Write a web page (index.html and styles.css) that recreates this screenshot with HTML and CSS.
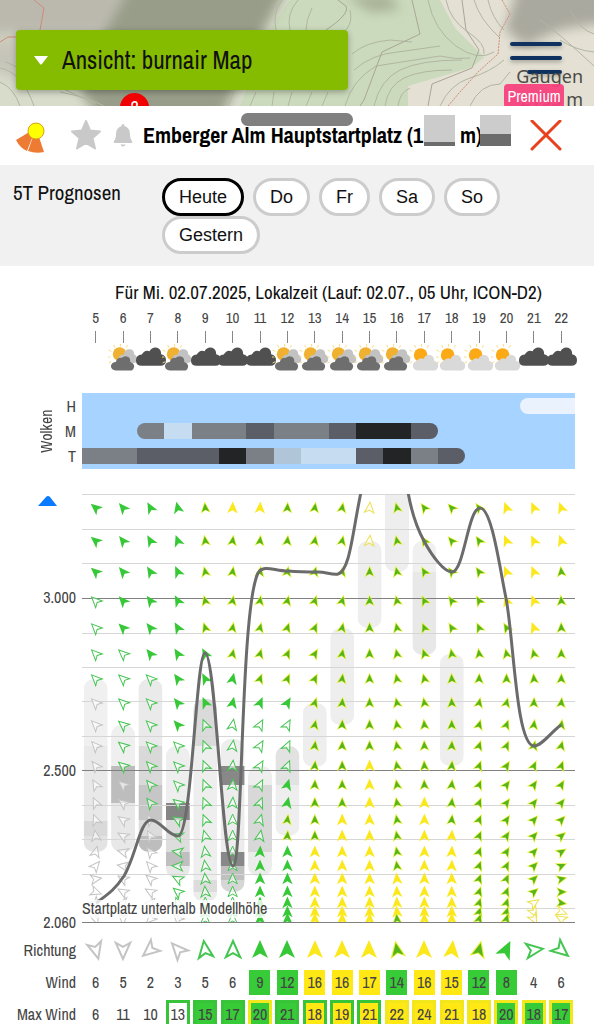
FILE: index.html
```html
<!DOCTYPE html>
<html lang="de">
<head>
    <meta charset="UTF-8">
    <meta name="viewport" content="width=device-width, initial-scale=1.0">
    <title>burnair Map</title>
    <link rel="stylesheet" href="styles.css">
</head>
<body>
    <div class="map">
        <svg class="terrain" viewBox="0 0 594 106" preserveAspectRatio="xMidYMid slice" aria-hidden="true">
            <defs>
                <filter id="soft" x="-20%" y="-20%" width="140%" height="140%"><feGaussianBlur stdDeviation="6"/></filter>
            </defs>
            <rect width="594" height="106" fill="#d8dccb"/>
            <path d="M290 0H440L455 25L485 55L470 70L410 90V106H240L270 30Z" fill="#cbdabc"/>
            <path d="M440 0H594V106H408V86L470 68L485 58L455 28Z" fill="#e4e1d4"/>
            <g filter="url(#soft)">
                <path d="M-20 -30H140L110 34H-20Z" fill="#bbb9ae"/>
                <path d="M140 -30H296L262 34L215 130H110L80 92L106 30Z" fill="#979d88"/>
                <path d="M-10 40H20V80L-10 70Z" fill="#c6c4b8"/>
                <path d="M345 -5H390L400 10L370 12Z" fill="#a7b096"/>
                <path d="M520 -20H610V22L560 30L525 46L505 30Z" fill="#aaa99f"/>
            </g>
            <g fill="none" stroke="#b1b6a1" stroke-width="1">
                <path d="M0 68Q22 72 34 106M0 82Q14 88 20 106M6 62Q40 78 96 104M60 92Q90 98 104 106"/>
                <path d="M282 0Q272 14 276 30M298 0Q286 14 290 30M312 8Q306 20 306 30"/>
                <path d="M350 10Q355 32 330 38M352 54Q366 42 390 40L412 42M354 70Q372 54 398 52L440 46M345 106Q352 80 376 66L440 56Q456 60 470 58"/>
                <path d="M234 92L228 106M256 92L250 106M274 92L272 106M292 92L288 106M312 92L306 106M328 92L322 106"/>
                <path d="M385 106Q388 86 404 78T452 70M374 106Q380 80 400 70T462 60M398 106Q400 92 410 88"/>
                <path d="M428 0Q434 30 456 46T494 52M446 0Q450 20 468 32T484 54M474 0Q480 20 500 38M488 0Q492 18 504 30"/>
                <path d="M440 106Q450 84 470 78T504 60M470 106Q480 84 500 84L510 72M560 40Q575 50 594 52M570 10Q580 30 594 34M540 20Q560 34 594 66"/>
            </g>
            <g fill="none" stroke="#a9a696" stroke-width="1">
                <path d="M326 30Q350 14 346 6L338 0M412 0L420 34L382 52L364 100L360 106M462 0L466 30L479 50L472 68L432 84L428 106"/>
            </g>
            <g fill="none" stroke="#cf8b78" stroke-width="1">
                <path d="M34 0L44 8L40 30M0 42L8 37H16"/>
                <path d="M502 0L510 14L500 32L498 54L478 72L460 92L448 106" stroke-dasharray="2 1"/>
            </g>
        </svg>
        <button class="view-select" type="button"><svg width="16" height="9" viewBox="0 0 16 9" aria-hidden="true"><path d="M1 0H15L9 8Q8 9 7 8Z" fill="#fff"/></svg>Ansicht: burnair Map</button>
        <button class="menu" type="button" aria-label="Menü"><i></i><i></i><i></i></button>
        <span class="peak">Gaugen<br>2193 m</span>
        <span class="premium">Premium</span>
        <span class="marker">2</span>
    </div>

    <main class="sheet">
        <header class="spot">
            <span class="handle"></span>
            <svg class="sector" width="32" height="36" viewBox="0 0 32 36" aria-hidden="true">
                <path d="M20 10L0 22Q4 30 11 33ZM20 10L12 33Q20 36 28 34Z" fill="#ee7b33"/>
                <circle cx="20" cy="13" r="8" fill="#ff0" stroke="#d8a21c" stroke-width="1"/>
            </svg>
            <svg class="star" width="32" height="32" viewBox="0 0 32 32" aria-hidden="true"><path d="M16 1L20 10.500L30 11.500L22.500 18L25 28.500L16 23L7 28.500L9.500 18L2 11.500L12 10.500Z" fill="#c9c9c9" stroke="#c9c9c9" stroke-width="2" stroke-linejoin="round"/></svg>
            <svg class="bell" width="20" height="23" viewBox="0 0 20 23" aria-hidden="true"><path d="M8.500 2Q8.500 0 10 0T11.500 2Q17 4 17 10Q17 15 19 17Q20 19 18 19H2Q0 19 1 17Q3 15 3 10Q3 4 8.500 2ZM7.500 20.500H12.500Q12 22.500 10 22.500T7.500 20.500Z" fill="#c9c9c9"/></svg>
            <h1>Emberger Alm Hauptstartplatz (1<i class="patch"></i> m)<i class="patch patch-low"></i></h1>
            <button class="close" type="button" aria-label="Schliessen"><svg width="32" height="32" viewBox="0 0 32 32"><path d="M2 1L30 29M30 1L2 29" stroke="#e8411c" stroke-width="3" stroke-linecap="round"/></svg></button>
        </header>

        <nav class="days">
            <span class="days-label">5T Prognosen</span>
            <div class="day-list">
                <button type="button" class="active">Heute</button>
                <button type="button">Do</button>
                <button type="button">Fr</button>
                <button type="button">Sa</button>
                <button type="button">So</button>
                <button type="button">Gestern</button>
            </div>
        </nav>

        <section class="forecast">
            <h2>Für Mi. 02.07.2025, Lokalzeit (Lauf: 02.07., 05 Uhr, ICON-D2)</h2>
            <div class="columns hours" id="hours"></div>
            <div class="columns weather" id="weather"></div>
            <div class="clouds">
                <span class="clouds-title">Wolken</span>
                <div class="cloud-labels"><span>H</span><span>M</span><span>T</span></div>
                <div class="cloud-rows" id="clouds"></div>
            </div>
            <svg class="chart" id="chart" viewBox="0 0 594 442" role="img" aria-label="Wind nach Höhe"></svg>
            <table class="wind">
                <tbody id="wind"></tbody>
            </table>
        </section>
    </main>

    <svg class="symbols" aria-hidden="true">
        <symbol id="cloudy" viewBox="0 0 32 28">
            <path d="M7 22Q1 22 1 16.500Q1 11 7 10.500Q10 5 15 7Q18 2 23 3.500Q27 5 27 10Q32 11 32 16Q32 22 26 22Z" fill="#505050"/>
        </symbol>
        <g id="rays" stroke="#fadc7c" stroke-width="1" stroke-linecap="round">
            <path d="M11 1V-2M5 2L4 0M17 2L18 0M1 6L-1 5M0 12H-2M1 17L-1 18M5 21L4 23"/>
        </g>
        <symbol id="mixed" viewBox="0 0 32 28">
            <use href="#rays" x="2" y="1"/>
            <circle cx="12" cy="10" r="7" fill="#f0b030"/>
            <path d="M13 18Q9 17 11 13Q13 10 16 11Q17 5 22 5Q27 5 27 10Q31 12 30 17Q28 20 25 19Z" fill="#c2c2c2"/>
            <path d="M8 27Q3 26 3 22Q4 18 8 18Q10 13 14 14Q17 11 21 13Q23 14 23 18Q27 19 27 23Q26 27 23 27Z" fill="#6e6e6e"/>
        </symbol>
        <symbol id="sunny" viewBox="0 0 32 28">
            <use href="#rays" x="2" y="1"/>
            <circle cx="12" cy="11" r="7" fill="#fba914"/>
            <path d="M9 27Q4 26 4 22Q4 18 8 17Q11 13 15 15Q17 10 22 11Q26 12 26 17Q31 18 30 23Q29 27 25 27Z" fill="#d9d9d9"/>
        </symbol>
    </svg>
    <script src="script.js"></script>
</body>
</html>
```
FILE: styles.css
```css
* {
    box-sizing: border-box;
}
body {
    margin: 0;
    height: 100vh;
    overflow: hidden;
    background-color: #fff;
    color: #111;
    font-family: "Archivo Narrow", "Liberation Sans Narrow", "Arial Narrow", "Roboto Condensed", "Liberation Sans", sans-serif;
}
button {
    border: none;
    background: none;
    padding: 0;
    color: inherit;
    font-family: inherit;
    cursor: pointer;
}
h1, h2 {
    margin: 0;
}
.map {
    position: relative;
    height: 106px;
    padding: 30px 16px 0;
    overflow: hidden;
}
.terrain {
    position: absolute;
    inset: 0;
    width: 100%;
    height: 100%;
}
.view-select {
    position: relative;
    display: flex;
    align-items: center;
    gap: 13px;
    width: 332px;
    height: 60px;
    padding: 0 17px;
    border-radius: 4px;
    background-color: #86bc00;
    box-shadow: 0 2px 6px rgba(0,0,0,0.3);
    font-size: 25px;
}
.menu {
    position: absolute;
    top: 42px;
    right: 32px;
    display: flex;
    flex-direction: column;
    align-items: flex-end;
    gap: 10px;
    filter: drop-shadow(0 2px 2px rgba(0,0,0,0.3));
}
.menu i {
    width: 52px;
    height: 4px;
    border-radius: 2px;
    background-color: #0f3160;
}
.menu i:last-child {
    width: 35px;
}
.peak {
    position: absolute;
    top: 65px;
    right: 11px;
    color: #4a4a46;
    font-family: "Noto Sans", sans-serif;
    font-size: 18px;
    line-height: 23px;
    text-align: right;
}
.premium {
    position: absolute;
    top: 84px;
    right: 30px;
    width: 60px;
    height: 24px;
    border-radius: 4px;
    background-color: rgba(248,62,125,0.93);
    color: #fff;
    font-size: 16px;
    line-height: 24px;
    text-align: center;
}
.marker {
    position: absolute;
    top: 93px;
    left: 120px;
    width: 29px;
    height: 29px;
    border-radius: 50%;
    background-color: #f00000;
    color: #fff;
    font-size: 18px;
    line-height: 29px;
    text-align: center;
}
.spot {
    position: relative;
    display: flex;
    align-items: center;
    height: 59px;
    padding: 0 32px 0 16px;
}
.handle {
    position: absolute;
    top: 7px;
    left: 50%;
    width: 112px;
    height: 13px;
    margin-left: -56px;
    border-radius: 7px;
    background-color: #808080;
}
.sector {
    margin-right: 22px;
}
.star {
    margin-right: 11px;
}
.bell {
    margin-right: 10px;
}
.spot h1 {
    flex: 1;
    font-size: 22px;
    line-height: 31px;
    white-space: nowrap;
    color: #000;
}
.patch {
    display: inline-block;
    width: 31px;
    height: 31px;
    margin: -6px 0 0 1px;
    vertical-align: -3px;
    background: linear-gradient(#ccc 27px, #6c6c6c 27px);
}
.patch-low {
    margin-left: -2px;
    background: linear-gradient(#ccc 19px, #6c6c6c 19px);
}
.close {
    display: flex;
}
.days {
    display: flex;
    gap: 10px;
    padding: 13px 13px 12px;
    background-color: #f1f1f1;
}
.days-label {
    flex: none;
    width: 139px;
    font-size: 21px;
    line-height: 30px;
}
.day-list {
    display: flex;
    flex-wrap: wrap;
    gap: 0 9px;
}
.day-list button {
    height: 38px;
    padding: 0 14px;
    border: 3px solid #ccc;
    border-radius: 19px;
    background-color: #fff;
    font-family: "Liberation Sans", Arial, sans-serif;
    font-size: 18px;
}
.day-list .active {
    border-color: #000;
}
.forecast {
    padding-top: 14px;
    color: #444;
}
.forecast h2 {
    margin: 0 19px 0 82px;
    color: #111;
    font-size: 19px;
    font-weight: normal;
    line-height: 24px;
    text-align: center;
    white-space: nowrap;
}
.columns {
    display: grid;
    grid-template-columns: repeat(18, minmax(0, 1fr));
    margin: 0 19px 0 82px;
    justify-items: center;
}
.hours {
    padding-top: 6px;
    font-size: 15px;
    line-height: 16px;
}
.hours span {
    display: flex;
    flex-direction: column;
    align-items: center;
    gap: 5px;
}
.hours span::after {
    content: "";
    width: 1px;
    height: 12px;
    background-color: #888;
}
.weather {
    height: 50px;
    padding-top: 1px;
}
.weather svg {
    width: 31px;
    height: 28px;
    overflow: visible;
}
.clouds {
    display: flex;
    height: 76px;
    margin-right: 19px;
    font-size: 16px;
}
.clouds-title {
    width: 55px;
    padding-right: 37px;
    line-height: 18px;
    writing-mode: vertical-rl;
    transform: rotate(180deg);
    text-align: center;
}
.cloud-labels {
    display: grid;
    width: 27px;
    padding-right: 6px;
    align-items: center;
    justify-items: end;
}
.cloud-rows {
    flex: 1;
    display: grid;
    background-color: #a6d3ff;
}
.cloud-row {
    display: grid;
    grid-template-columns: repeat(18, 1fr);
    align-items: center;
}
.cloud-row i {
    height: 16px;
}
.cloud-row .start {
    border-radius: 8px 0 0 8px;
}
.cloud-row .end {
    border-radius: 0 8px 8px 0;
}
.c1 { background-color: #eaf3fd; }
.c2 { background-color: #c6dcf0; }
.c3 { background-color: #b1c5d9; }
.c4 { background-color: #7b8086; }
.c5 { background-color: #5b5e66; }
.c6 { background-color: #222426; }
.chart {
    display: block;
    width: 100%;
    margin-top: 23px;
    font-size: 16px;
}
.chart text {
    fill: #444;
}
.chart .axis {
    text-anchor: end;
}
.grid {
    stroke: #d6d6d6;
}
.grid-main {
    stroke: #808080;
}
.curve {
    fill: none;
    stroke: #6b6b6b;
    stroke-width: 3;
}
.arrow-w { fill: #fff; fill-opacity: 0.6; stroke: #c4c4c4; }
.arrow-g { fill: #fff; fill-opacity: 0.6; stroke: #45c552; }
.arrow-y { fill: #fff; fill-opacity: 0.6; stroke: #ede050; }
.arrow-G { fill: #37c837; }
.arrow-Y { fill: #fbe81c; }
.arrow-M { fill: #e8f03c; }
.arrow-core { fill: #56b51c; }
.wind {
    width: calc(100% - 19px);
    border-collapse: collapse;
    table-layout: fixed;
    font-size: 16px;
}
.wind th {
    width: 82px;
    padding: 0 6px 0 0;
    font-weight: normal;
    text-align: right;
    white-space: nowrap;
}
.wind td {
    height: 32px;
    padding: 0;
    text-align: center;
}
.wind svg {
    display: block;
    width: 20px;
    height: 24px;
    margin: 0 auto;
    overflow: visible;
    stroke-width: 2;
}
.wind span {
    display: block;
    width: 21px;
    height: 25px;
    margin: 0 auto;
    line-height: 25px;
}
.wind .max {
    width: 24px;
    height: 29px;
    border: 3px solid transparent;
    line-height: 23px;
}
.wind .fill-g { background-color: #38cb38; }
.wind .fill-y { background-color: #ffe814; }
.wind .line-g { border-color: #38c438; }
.wind .line-y { border-color: #f2e61c; }
.symbols {
    position: absolute;
    width: 0;
    height: 0;
}
```
FILE: script.js
```js
const COL = 493 / 18;
const LEFT = 82;

const weather = ['', 'mixed', 'cloudy', 'mixed', 'cloudy', 'cloudy', 'cloudy', 'mixed', 'mixed',
    'mixed', 'mixed', 'mixed', 'sunny', 'sunny', 'sunny', 'sunny', 'cloudy', 'cloudy'];

// cloud cover per hour, 0 = none, 6 = darkest
const clouds = ['000000000000000011', '004244544566500000', '44555643225645'.padEnd(18, '0')];

const levels = [14, 47, 78, 107, 134, 160, 185, 209, 231, 252, 272, 291, 309, 326, 342, 358, 372, 385, 398, 409, 418, 425];

// one line per hour, lowest level last: w/g/y outline, G/Y filled, M green on yellow
const arrows = [
    ['GGGggggwwwwwwwwwwwwwww', [-50, -50, -48, -45, -45, -45, -45, -45, -45, -42, -38, -30, -25, -20, -8, 15, 40, 80, 110, 140, 160, 160]],
    ['GGGGGggggggwwwwwwwwwww', [-40, -38, -40, -42, -45, -48, -48, -48, -50, -50, -50, -50, -52, -55, -60, -75, -80, -60, -60, -100, 180, 180]],
    ['GGGGGGgggggggwwwwwwwww', [-28, -30, -32, -35, -38, -38, -46, -45, -45, -45, -42, -40, -38, -30, -30, -38, -42, -50, -60, -90, -120, -135]],
    ['GGGGGGGGGgggggggggggww', [-14, -20, -25, -28, -30, -32, -35, -38, -42, -45, -45, -45, -52, -60, -70, -80, -88, -62, -50, -20, -45, -45]],
    ['MMMMMGGGgggggggggggggg', [-5, -8, -12, -15, -18, -28, -28, -25, -22, -22, -22, -22, -22, -22, -15, -8, -8, -5, -5, 0, 0, 0]],
    ['YMMMMMGGgggggggggggggg', [2, 8, 8, 10, 10, 12, 12, 12, 10, 8, 5, 5, 3, 0, 0, 0, 0, 0, 0, 0, 0, 0]],
    ['YMMMMMMGgggggggGGGGGGG', [3, 6, 8, 10, 14, 16, 20, 24, 28, 30, 30, 27, 22, 16, 10, 3, 0, 0, 0, 0, 0, 0]],
    ['MMMMMMMGgggGGMMGGGGGGG', [3, 6, 10, 14, 18, 24, 24, 30, 28, 25, 22, 16, 12, 8, 5, 0, 0, 0, 0, 0, 0, 0]],
    ['MMMMMMMMMMMMMMMYYYYYYY', [8, 10, 14, 18, 24, 30, 26, 18, 12, 8, 5, 3, 0, 0, 0, 0, 0, 0, 0, 0, 0, 0]],
    ['MMMMMMMMMMMMMYYYYYYYYY', [10, 12, 14, 16, 12, 10, 8, 5, 3, 2, 0, 0, 0, 0, 0, 0, 0, 0, 0, 0, 0, 0]],
    ['yyMMMMMMMMYYYYYYYYYYYY', [5, 4, 0, 0, 0, 0, 0, 0, 0, 0, 0, 0, 0, 0, 0, 0, 0, 0, 0, 0, 0, 0]],
    ['MMMMMMMMMMMMMMMMMYYYYM', [-14, -12, -12, -12, -12, -12, -12, -12, -10, -10, -10, -10, -10, -10, -10, -10, -8, -5, -3, -3, -5, -5]],
    ['MMMMMMMMMMMMYYYYYYYYYY', [-36, -32, -30, -25, -22, -18, -14, -10, -6, -2, -3, -2, 0, 0, 0, 0, 0, 0, 0, 0, 0, 0]],
    ['MMMMMMMMMMMMMMYYYYYYYY', [-42, -40, -38, -34, -30, -10, -3, -2, 0, 3, 5, 6, 6, 6, 4, 3, 2, 0, 0, 0, 0, 0]],
    ['MMMMMMMMMMMMMMMMMMMMMM', [-35, -34, -34, -30, -24, -8, 2, 12, 16, 18, 20, 22, 22, 22, 22, 20, 20, 20, 18, 18, 18, 18]],
    ['YYYYMMMMMMMMMMMMMMMMMM', [-20, -22, -22, -20, -30, -12, 0, 14, 20, 24, 32, 36, 36, 34, 32, 30, 26, 24, 20, 18, 16, 16]],
    ['YYYYYMMMMMMMMMMMMMMyyy', [-24, -26, -22, -22, -20, -14, -5, 3, 8, 14, 24, 34, 38, 42, 42, 42, 44, 46, 50, 56, 150, 150]],
    ['YYMMMMMMMMMMMMMMMMMMyy', [-20, -18, -6, -4, -2, 0, 2, 6, 10, 14, 20, 30, 38, 44, 50, 58, 66, 76, 88, 98, 110, -60]]
];

// [column, top, bottom, inner segments as [top, bottom, shade]]
const layers = [
    [0, 185, 358, [[185, 252, '#f0f0f0'], [252, 327, '#e9e9e9'], [327, 342, '#d9d9d9'], [342, 358, '#e3e3e3']]],
    [1, 231, 358, [[231, 272, '#efefef'], [272, 309, '#bdbdbd'], [309, 358, '#e8e8e8']]],
    [2, 185, 358, [[185, 252, '#eaeaea'], [252, 291, '#d9d9d9'], [291, 326, '#c6c6c6'], [326, 342, '#dcdcdc'], [342, 358, '#bdbdbd']]],
    [3, 252, 384, [[252, 309, '#eeeeee'], [309, 326, '#858585'], [326, 358, '#dddddd'], [358, 372, '#bfbfbf'], [372, 384, '#e8e8e8']]],
    [4, 205, 408, [[205, 252, '#dadada'], [252, 386, '#eeeeee'], [386, 398, '#dcdcdc'], [398, 408, '#ececec']]],
    [5, 245, 398, [[245, 272, '#eeeeee'], [272, 291, '#888888'], [291, 358, '#ececec'], [358, 372, '#888888'], [372, 386, '#c0c0c0'], [386, 398, '#d6d6d6']]],
    [6, 272, 382, [[272, 291, '#eeeeee'], [291, 358, '#d8d8d8'], [358, 382, '#ececec']]],
    [7, 252, 342, [[252, 291, '#e2e2e2'], [291, 342, '#eeeeee']]],
    [8, 209, 273, [[209, 273, '#eeeeee']]],
    [9, 134, 231, [[134, 231, '#eeeeee']]],
    [10, 47, 134, [[47, 134, '#eeeeee']]],
    [11, -10, 78, [[-10, 78, '#eeeeee']]],
    [12, 47, 161, [[47, 78, '#f0f0f0'], [78, 161, '#e8e8e8']]],
    [13, 160, 272, [[160, 272, '#eeeeee']]]
];

const wind = [['6', ''], ['5', ''], ['2', ''], ['3', ''], ['5', ''], ['6', ''], ['9', 'g'], ['12', 'g'], ['16', 'y'],
    ['16', 'y'], ['17', 'y'], ['14', 'g'], ['16', 'y'], ['15', 'y'], ['12', 'g'], ['8', 'g'], ['4', ''], ['6', '']];

// value, fill, border
const maxWind = [['6', '', ''], ['11', '', ''], ['10', '', ''], ['13', '', 'g'], ['15', 'g', 'g'], ['17', 'g', 'g'],
    ['20', 'g', 'y'], ['21', 'g', 'g'], ['18', 'y', 'g'], ['19', 'y', 'g'], ['21', 'y', 'g'], ['22', 'y', 'y'],
    ['24', 'y', 'y'], ['21', 'y', 'y'], ['18', 'y', 'y'], ['20', 'g', 'y'], ['18', 'g', 'y'], ['17', 'g', 'y']];

const direction = ['w165', 'w180', 'w-130', 'w-42', 'g-8', 'g0', 'G0', 'G0', 'Y0', 'Y0', 'Y0', 'M-10', 'Y0', 'Y6', 'M14', 'G26', 'g82', 'g130'];

function shape(s) {
    const w = s * 0.8;
    return `M0 ${-s}L${w} ${s * 0.8}L0 ${s * 0.35}L${-w} ${s * 0.8}Z`;
}

function arrow(type, angle, x, y, size) {
    const outline = type === 'w' || type === 'g' || type === 'y';
    const s = outline ? size * 0.9 : size;
    const place = `transform="translate(${x} ${y}) rotate(${angle})"`;
    const core = type === 'M' ? `<path class="arrow-core" ${place} d="${shape(size * 0.72)}"/>` : '';
    return `<path class="arrow-${type}" ${place} d="${shape(s)}"/>${core}`;
}

function center(i) {
    return LEFT + COL * (i + 0.5);
}

document.getElementById('hours').innerHTML = weather.map((w, i) => `<span>${i + 5}</span>`).join('');

document.getElementById('weather').innerHTML = weather.map(w =>
    w ? `<svg><use href="#${w}"/></svg>` : '<span></span>').join('');

document.getElementById('clouds').innerHTML = clouds.map(row => {
    const cells = [...row].map((c, i) => {
        if (c === '0') return '<i></i>';
        const start = i > 0 && row[i - 1] === '0' ? ' start' : '';
        const end = i < 17 && row[i + 1] === '0' ? ' end' : '';
        return `<i class="c${c}${start}${end}"></i>`;
    });
    return `<div class="cloud-row">${cells.join('')}</div>`;
}).join('');

function drawChart() {
    let svg = '<defs><clipPath id="plot"><rect x="82" y="0" width="493" height="428"/></clipPath>';
    layers.forEach(([col, top, bottom]) => {
        svg += `<clipPath id="layer${col}"><rect x="${center(col) - 12}" y="${top}" width="24" height="${bottom - top}" rx="10"/></clipPath>`;
    });
    svg += '</defs><g transform="translate(0 2)"><g clip-path="url(#plot)">';

    layers.forEach(([col, top, bottom, parts]) => {
        svg += `<g clip-path="url(#layer${col})">`;
        parts.forEach(([y1, y2, shade]) => {
            svg += `<rect x="${center(col) - 12}" y="${y1}" width="24" height="${y2 - y1}" fill="${shade}"/>`;
        });
        svg += '</g>';
    });
    svg += '</g>';

    [0, 35, 69, 139, 173, 207, 242, 311, 345, 380, 414].forEach(y => {
        svg += `<path class="grid" d="M82 ${y + 0.5}H575"/>`;
    });
    [104, 276, 428].forEach(y => {
        svg += `<path class="grid-main" d="M82 ${y + 0.5}H575"/>`;
    });

    svg += '<g clip-path="url(#plot)">';
    arrows.forEach(([types, angles], i) => {
        levels.forEach((y, n) => {
            svg += arrow(types[n], angles[n], center(i), y, 6.5);
        });
    });
    svg += '<path class="curve" transform="translate(82 0)" d="M14 409C28 399 34 394 42 382C54 362 58 326 69 326C78 326 86 342 96 342C110 342 114 159 123 159C134 159 140 372 151 372C161 372 158 116 176 79C182 70 192 77 206 77C218 78 226 78 236 78C244 78 250 81 256 80C268 76 270 41 279 -2M326 -2C330 21 336 36 342 47C350 62 362 78 370 78C382 78 386 14 398 14C410 14 418 76 424 104C432 146 434 251 452 252C460 252 469 238 479 231"/>';
    svg += '</g>';

    svg += '<rect x="82" y="406" width="184" height="18" fill="#fff" fill-opacity="0.8"/>';
    svg += '<text x="82" y="420">Startplatz unterhalb Modellhöhe</text>';
    svg += '<path d="M38 12L46 3Q48 1 50 3L57 12Z" fill="#0a7aff"/>';
    svg += '<text class="axis" x="76" y="109">3.000</text>';
    svg += '<text class="axis" x="76" y="282">2.500</text>';
    svg += '<text class="axis" x="76" y="434">2.060</text></g>';
    document.getElementById('chart').innerHTML = svg;
}

drawChart();

const arrowCells = direction.map(d =>
    `<td><svg viewBox="-10 -12 20 24">${arrow(d[0], d.slice(1), 0, 0, 10)}</svg></td>`).join('');
const windCells = wind.map(([v, f]) => `<td><span class="fill-${f}">${v}</span></td>`).join('');
const maxCells = maxWind.map(([v, f, l]) => `<td><span class="max fill-${f} line-${l}">${v}</span></td>`).join('');

document.getElementById('wind').innerHTML =
    `<tr><th scope="row">Richtung</th>${arrowCells}</tr>
    <tr><th scope="row">Wind</th>${windCells}</tr>
    <tr><th scope="row">Max Wind</th>${maxCells}</tr>`;
```
